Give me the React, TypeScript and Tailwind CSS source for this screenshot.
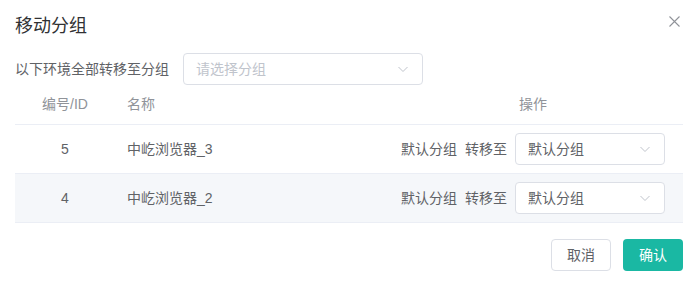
import React from "react";

const font = {
  fontFamily:
    '"Helvetica Neue", "Liberation Sans", "Noto Sans CJK SC", sans-serif',
};

type Row = { id: number; name: string; group: string };

const rows: Row[] = [
  { id: 5, name: "中屹浏览器_3", group: "默认分组" },
  { id: 4, name: "中屹浏览器_2", group: "默认分组" },
];

function Chevron() {
  return (
    <svg width="12" height="12" viewBox="0 0 12 12" fill="none">
      <path d="M1.5 4l4.5 4.5L10.5 4" stroke="#c0c4cc" strokeWidth="1" />
    </svg>
  );
}

function Select({
  value,
  placeholder,
  className,
}: {
  value?: string;
  placeholder?: string;
  className: string;
}) {
  return (
    <div
      className={`flex h-[32px] items-center justify-between rounded-[4px] border border-[#dcdfe6] bg-white pl-[12px] pr-[13px] text-[14px] ${className}`}
    >
      <span className={value ? "text-[#606266]" : "text-[#c0c4cc]"}>
        {value ?? placeholder}
      </span>
      <Chevron />
    </div>
  );
}

export default function App() {
  return (
    <div className="w-[695px] h-[287px] bg-white" style={font}>
      {/* Header */}
      <div className="flex items-start justify-between pl-[15px] pr-[15px] pt-[14px]">
        <h1 className="text-[18px] leading-6 text-[#303133]">移动分组</h1>
        <svg width="11" height="11" viewBox="0 0 11 11" className="mt-[2px]">
          <path d="M0.5 0.5l10 10M10.5 0.5l-10 10" stroke="#909399" strokeWidth="1.1" />
        </svg>
      </div>

      {/* Bulk move */}
      <div className="mt-[15px] flex items-center px-[15px]">
        <span className="text-[14px] text-[#606266] w-[168px]">以下环境全部转移至分组</span>
        <Select placeholder="请选择分组" className="w-[240px]" />
      </div>

      {/* Table */}
      <div className="ml-[15px] mr-[12px] text-[14px]">
        <div className="grid h-[40px] grid-cols-[100px_1fr_auto] items-center border-b border-[#ebeef5] text-[#909399]">
          <div className="text-center">编号/ID</div>
          <div className="pl-[12px]">名称</div>
          <div className="pr-[18px]">
            <div className="w-[150px] pl-[4px]">操作</div>
          </div>
        </div>
        {rows.map((r, i) => (
          <div
            key={r.id}
            className={`grid h-[49px] grid-cols-[100px_1fr_auto] items-center border-b border-[#ebeef5] text-[#606266] ${
              i % 2 === 1 ? "bg-[#f5f7fa]" : ""
            }`}
          >
            <div className="text-center">{r.id}</div>
            <div className="pl-[12px]">{r.name}</div>
            <div className="flex items-center gap-[8px] pr-[18px]">
              <span>{r.group}</span>
              <span>转移至</span>
              <Select value="默认分组" className="w-[150px] h-[31px]" />
            </div>
          </div>
        ))}
      </div>

      {/* Footer */}
      <div className="mt-[16px] flex justify-end gap-[12px] px-[12px]">
        <button className="h-[32px] w-[60px] rounded-[4px] border border-[#dcdfe6] bg-white text-[14px] text-[#606266]">
          取消
        </button>
        <button className="h-[32px] w-[60px] rounded-[4px] bg-[#1ab8a3] text-[14px] text-white">
          确认
        </button>
      </div>
    </div>
  );
}
